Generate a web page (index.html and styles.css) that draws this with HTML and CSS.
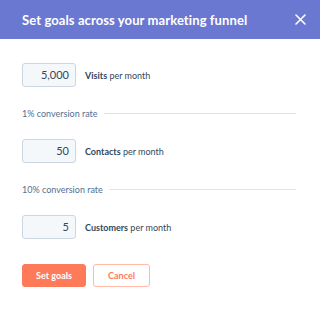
FILE: index.html
```html
<!DOCTYPE html>
<html>
<head>
<meta charset="utf-8">
<link rel="stylesheet" href="styles.css">
</head>
<body>
<div class="modal">
  <header class="head">
    <h1 class="title">Set goals across your marketing funnel</h1>
    <svg class="close" width="11" height="11" viewBox="0 0 11 11"><path d="M1 1L10 10M10 1L1 10" stroke="#fff" stroke-width="1.6" stroke-linecap="round"/></svg>
  </header>
  <div class="body">
    <div class="row"><div class="field">5,000</div><span class="lbl"><b>Visits</b> per month</span></div>
    <div class="rate"><span>1% conversion rate</span><i class="line"></i></div>
    <div class="row"><div class="field">50</div><span class="lbl"><b>Contacts</b> per month</span></div>
    <div class="rate"><span>10% conversion rate</span><i class="line"></i></div>
    <div class="row"><div class="field">5</div><span class="lbl"><b>Customers</b> per month</span></div>
    <div class="actions">
      <button class="btn primary">Set goals</button>
      <button class="btn secondary">Cancel</button>
    </div>
  </div>
</div>
</body>
</html>
```
FILE: styles.css
```css
* { box-sizing: border-box; }
html, body { margin: 0; padding: 0; background: #fff; }
body { font-family: Lato, "Noto Sans", sans-serif; color: #33475b; width: 320px; height: 311px; overflow: hidden; }
.head { height: 39px; background: #6a78d1; display: flex; align-items: center; justify-content: space-between; padding: 0 14px 0 22px; }
.title { margin: 0; font-size: 13px; font-weight: 700; color: #fff; letter-spacing: 0.1px; }
.close { display: block; }
.body { padding: 24px 24px 0 22px; display: flex; flex-direction: column; }
.row { display: flex; align-items: center; gap: 9px; }
.field { width: 54px; height: 24px; border: 1px solid #cbd6e2; border-radius: 3px; background: #f5f8fa; font-size: 11px; text-align: right; padding-right: 6px; line-height: 22px; color: #33475b; }
.lbl { font-size: 9px; color: #33475b; }
.lbl b { font-weight: 700; }
.rate { display: flex; align-items: center; gap: 6px; height: 52px; font-size: 9px; color: #516f90; }
.line { flex: 1; height: 1px; background: #dfe3eb; }
.actions { display: flex; gap: 7px; margin-top: 25px; }
.btn { height: 23px; border-radius: 3px; font-family: inherit; font-size: 9px; font-weight: 700; padding: 0; }
.primary { width: 64px; background: #ff7a59; border: 1px solid #ff7a59; color: #fff; }
.secondary { width: 57px; background: #fff; border: 1px solid #ffb9a6; color: #ff7a59; }
```
